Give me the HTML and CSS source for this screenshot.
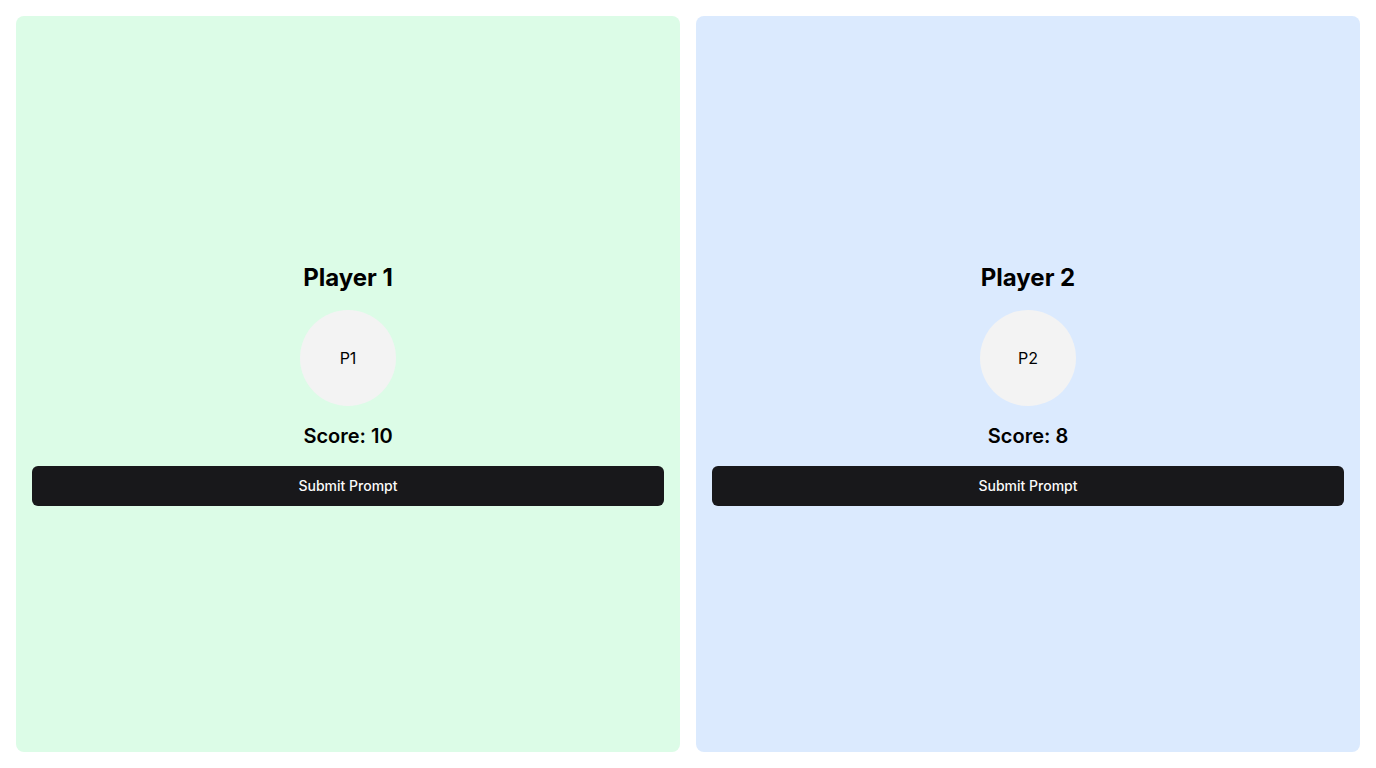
FILE: index.html
```html
<!DOCTYPE html>
<html lang="en">
<head>
<meta charset="utf-8">
<title>Players</title>
<link rel="stylesheet" href="styles.css">
</head>
<body>
<main class="board">
  <section class="panel panel-green">
    <h2 class="name">Player 1</h2>
    <div class="avatar">P1</div>
    <p class="score">Score: 10</p>
    <button class="submit">Submit Prompt</button>
  </section>
  <section class="panel panel-blue">
    <h2 class="name">Player 2</h2>
    <div class="avatar">P2</div>
    <p class="score">Score: 8</p>
    <button class="submit">Submit Prompt</button>
  </section>
</main>
</body>
</html>
```
FILE: styles.css
```css
* { box-sizing: border-box; }
html, body { margin: 0; height: 100%; }
body {
  background: #ffffff;
  font-family: Inter, "Noto Sans", sans-serif;
  color: #000000;
}
.board {
  height: 100vh;
  padding: 16px;
  display: grid;
  grid-template-columns: 1fr 1fr;
  gap: 16px;
}
.panel {
  border-radius: 8px;
  padding: 16px;
  display: flex;
  flex-direction: column;
  align-items: center;
  justify-content: center;
  gap: 16px;
}
.panel-green { background: #dcfce7; }
.panel-blue { background: #dbeafe; }
.name {
  margin: 0;
  font-size: 24px;
  line-height: 32px;
  font-weight: 700;
}
.avatar {
  width: 96px;
  height: 96px;
  border-radius: 50%;
  background: #f3f3f3;
  display: flex;
  align-items: center;
  justify-content: center;
  font-size: 16px;
  color: #000000;
}
.score {
  margin: 0;
  font-size: 20px;
  line-height: 28px;
  font-weight: 600;
}
.submit {
  width: 100%;
  height: 40px;
  border: 0;
  border-radius: 6px;
  padding: 0 16px 2px;
  background: #18181b;
  color: #fafafa;
  font-family: inherit;
  font-size: 14px;
  font-weight: 500;
}
```
